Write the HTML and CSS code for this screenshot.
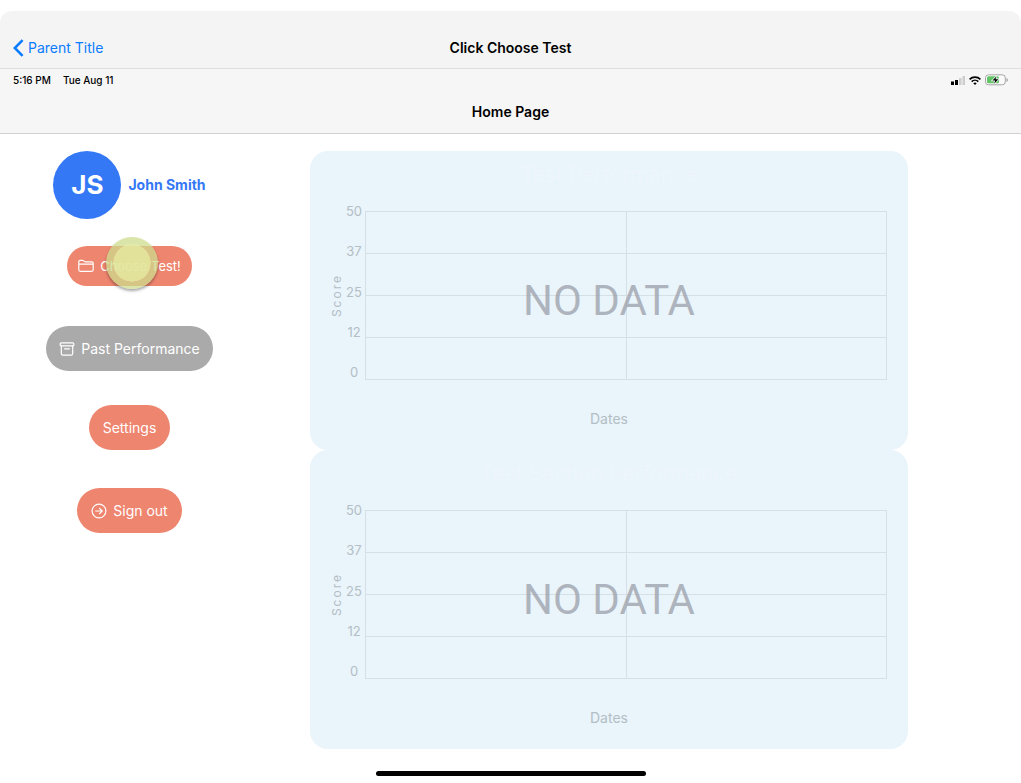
FILE: index.html
```html
<!DOCTYPE html>
<html lang="en">
<head>
<meta charset="utf-8">
<meta name="viewport" content="width=device-width, initial-scale=1">
<title>Home Page</title>
<link rel="stylesheet" href="styles.css">
</head>
<body>
<header class="nav-bar">
  <a class="back-link" href="#">
    <svg class="back-icon" width="11" height="18" viewBox="0 0 11 18" aria-hidden="true"><path d="M9.6 1.2 1.8 9l7.8 7.8"/></svg>
    <span>Parent Title</span>
  </a>
  <span class="nav-title">Click Choose Test</span>
</header>
<div class="page-bar">
  <div class="status">
    <div class="status-time"><span>5:16 PM</span><span>Tue Aug 11</span></div>
    <div class="status-icons">
      <svg width="14" height="9" viewBox="0 0 14 9" aria-hidden="true"><path d="M0 5.500h3V9H0zM4 4h3v5H4z"/><path class="faint" d="M8 2h2.500v7H8zM11.500 0H14v9h-2.500z"/></svg>
      <svg width="12" height="9" viewBox="0 0 12 9" aria-hidden="true"><g fill="none" stroke="#000" stroke-width="1.700"><path d="M.6 3.300a7.700 7.700 0 0 1 10.800 0"/><path d="M2.700 5.600a4.700 4.700 0 0 1 6.600 0"/></g><path d="M6 9 4.300 7.200a2.500 2.500 0 0 1 3.400 0z"/></svg>
      <svg width="23" height="12" viewBox="0 0 23 12" aria-hidden="true"><rect x=".5" y=".8" width="19.800" height="10" rx="3" fill="#fafafa" stroke="#a5a5a5"/><path d="M21.500 4v4q1.300-.7 1.300-2t-1.300-2z" fill="#999"/><rect x="2" y="2.300" width="12" height="7" rx="1.500" fill="#62c466"/><path d="M11.400 2.400 7.400 6.500h2.700l-.9 3.200 4.200-4.400h-2.800z" stroke="#f6f6f6" stroke-width="1.400" paint-order="stroke"/></svg>
    </div>
  </div>
  <h1 class="page-title">Home Page</h1>
</div>
<main class="content">
  <nav class="sidebar" aria-label="Main">
    <div class="profile"><span class="avatar">JS</span><span class="profile-name">John Smith</span></div>
    <div class="choose-wrap">
      <button class="pill pill-choose" type="button">
        <svg class="icon" width="16" height="14" viewBox="0 0 16 14" aria-hidden="true"><path d="M.8 10.800V2.500Q.8 1.300 2 1.300h2.700q.6 0 1 .5l.6.6q.4.400 1 .400h6.400q1.500 0 1.500 1.400v6.600q0 1.500-1.500 1.500H2.300Q.8 12.300.8 10.800zM.8 5.200h14.400"/></svg>
        <span>Choose Test!</span>
      </button>
      <span class="touch"></span>
    </div>
    <button class="pill pill-past" type="button">
      <svg class="icon" width="16" height="16" viewBox="0 0 16 16" aria-hidden="true"><rect x="1.200" y="1.800" width="13.600" height="3.100" rx="1"/><path d="M2.300 4.900v7.600q0 1.700 1.700 1.700h8q1.700 0 1.700-1.700V4.900M5.600 7.800h4.800"/></svg>
      <span>Past Performance</span>
    </button>
    <button class="pill" type="button">Settings</button>
    <button class="pill pill-out" type="button">
      <svg class="icon" width="16" height="16" viewBox="0 0 16 16" aria-hidden="true"><circle cx="8" cy="8" r="6.900"/><path d="M4.700 8h6.400M8.600 5.400 11.200 8l-2.600 2.600"/></svg>
      <span>Sign out</span>
    </button>
  </nav>
  <div class="charts">
    <section class="chart">
      <h2 class="chart-title">Test Performance</h2>
      <div class="chart-body">
        <div class="axis-name"><span>Score</span></div>
        <div class="ticks"><span>50</span><span>37</span><span>25</span><span>12</span><span>0</span></div>
        <div class="plot">
          <div class="grid"><i></i><i></i><i></i><i></i><i></i><i></i><i></i><i></i></div>
          <span class="no-data">NO DATA</span>
        </div>
      </div>
      <div class="x-name">Dates</div>
    </section>
    <section class="chart">
      <h2 class="chart-title">Test Section Performance</h2>
      <div class="chart-body">
        <div class="axis-name"><span>Score</span></div>
        <div class="ticks"><span>50</span><span>37</span><span>25</span><span>12</span><span>0</span></div>
        <div class="plot">
          <div class="grid"><i></i><i></i><i></i><i></i><i></i><i></i><i></i><i></i></div>
          <span class="no-data">NO DATA</span>
        </div>
      </div>
      <div class="x-name">Dates</div>
    </section>
  </div>
</main>
<footer class="home-area"><div class="home-bar"></div></footer>
</body>
</html>
```
FILE: styles.css
```css
* { box-sizing: border-box; }

body {
  margin: 0;
  padding-top: 11px;
  background: #fff;
  color: #000;
  font-family: Inter, "Liberation Sans", sans-serif;
  font-size: 14px;
  line-height: 20px;
}

.nav-bar {
  display: grid;
  grid-template-columns: 1fr auto 1fr;
  align-items: center;
  padding: 27px 13px 10px;
  background: #f4f4f4;
  border-bottom: 1px solid #dedede;
  border-radius: 12px 12px 0 0;
}

.back-link {
  display: flex;
  align-items: center;
  gap: 4px;
  color: #0a7cff;
  text-decoration: none;
}

.back-icon { fill: none; stroke: #0a7cff; stroke-width: 2.5; }

.nav-title { font-weight: 600; }

.page-bar {
  padding: 3px 13px 11px;
  background: #f6f6f6;
  border-bottom: 1px solid #d2d2d2;
}

.status {
  display: flex;
  justify-content: space-between;
  align-items: center;
  height: 16px;
  font-size: 10px;
  font-weight: 500;
}

.status-time { display: flex; gap: 12px; }
.status-icons { display: flex; align-items: center; gap: 4px; }
.faint { fill: #cdcdcd; }

.page-title {
  margin: 14px 0 0;
  font-size: 14px;
  font-weight: 600;
  text-align: center;
}

.content {
  display: flex;
  padding-top: 17px;
}

.sidebar {
  display: flex;
  flex-direction: column;
  align-items: center;
  flex: 0 0 259px;
}

.profile {
  display: flex;
  align-items: center;
  gap: 7px;
  color: #3478f6;
  font-weight: 700;
}

.avatar {
  display: flex;
  align-items: center;
  justify-content: center;
  width: 68px;
  height: 68px;
  border-radius: 50%;
  background: #3478f6;
  color: #fff;
  font-size: 26px;
}

.pill {
  display: flex;
  align-items: center;
  gap: 6px;
  height: 45px;
  padding: 0 14px;
  border: 0;
  border-radius: 23px;
  background: #ee856f;
  color: #fff;
  font: inherit;
  white-space: nowrap;
}

.icon { fill: none; stroke: #fff; stroke-width: 1.2; stroke-linecap: round; stroke-linejoin: round; }

.choose-wrap { position: relative; margin: 27px 0 40px; }
.pill-choose { height: 40px; padding: 0 11px; font-size: 13px; }
.pill-past { margin-bottom: 34px; padding: 0 13px; background: #aaa; }
.pill-out { margin-top: 38px; }

/* Touch indicator that lies over the pressed button */
.touch {
  position: absolute;
  top: -9px;
  left: 39px;
  width: 52px;
  height: 52px;
  border: 7px solid rgba(206, 220, 142, 0.75);
  border-radius: 50%;
  background: rgba(225, 232, 158, 0.94);
  background-clip: padding-box;
  box-shadow: 0 2px 3px rgba(0, 0, 0, 0.35);
}

.charts { flex: 1; padding: 0 113px 0 51px; }

.chart {
  padding: 9px 21px 21px;
  border-radius: 18px;
  background: #e9f4fb;
  color: #b4bec5;
}

.chart-title {
  margin: 0 0 13px;
  color: #eef5fd;
  font-size: 21px;
  font-weight: 400;
  line-height: 30px;
  text-align: center;
}

.chart-body { display: flex; }

.axis-name {
  display: flex;
  align-items: center;
  justify-content: center;
  width: 12px;
  margin-top: 8px;
  font-size: 12px;
  line-height: 12px;
  letter-spacing: 2px;
}

.axis-name span { writing-mode: vertical-rl; transform: rotate(180deg); }

.ticks {
  display: flex;
  flex-direction: column;
  justify-content: space-between;
  align-items: center;
  width: 22px;
  height: 177px;
  font-size: 13px;
  line-height: 16px;
}

.plot {
  display: grid;
  flex: 1;
  height: 169px;
  margin-top: 8px;
}

.grid {
  display: grid;
  grid-area: 1 / 1;
  grid-template-columns: 1fr 1fr;
  border: solid #d5e0e6;
  border-width: 1px 0 0 1px;
}

.grid i { border: solid #d5e0e6; border-width: 0 1px 1px 0; }

.no-data {
  grid-area: 1 / 1;
  place-self: center;
  margin: 10px 34px 0 0;
  color: rgba(152, 155, 165, 0.72);
  font-family: Roboto, Inter, sans-serif;
  font-size: 42px;
  line-height: 50px;
}

.x-name { margin-top: 29px; text-align: center; }

.home-area { display: flex; justify-content: center; padding: 22px 0 7px; }
.home-bar { width: 270px; height: 5px; border-radius: 3px; background: #000; }
```
